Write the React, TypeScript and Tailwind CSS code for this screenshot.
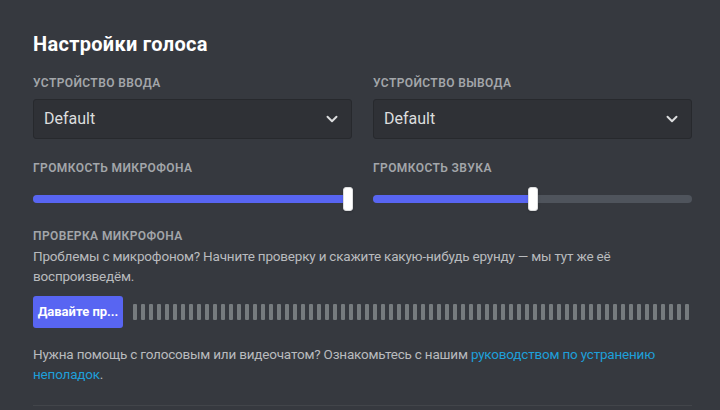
import React from 'react';
import { ChevronDown } from 'lucide-react';

const font = { fontFamily: 'Roboto, "Noto Sans", sans-serif' };

const Label: React.FC<{ children: React.ReactNode; className?: string }> = ({ children, className = '' }) => (
  <div className={`text-[12px] leading-4 font-semibold uppercase tracking-[0.4px] text-[#a3a6aa] ${className}`}>{children}</div>
);

const Select: React.FC<{ value: string }> = ({ value }) => (
  <div className="mt-2 h-10 flex items-center justify-between rounded-[3px] border border-[#27292d] bg-[#2f3136] pl-[10px] pr-[10px]">
    <span className="text-[16px] text-[#dcddde]">{value}</span>
    <ChevronDown size={18} strokeWidth={2.6} className="text-[#dcddde]" />
  </div>
);

const Slider: React.FC<{ percent: number }> = ({ percent }) => (
  <div className="relative mt-[11px] h-6 flex items-center">
    <div className="h-2 w-full rounded-full bg-[#4f545c]">
      <div className="h-2 rounded-full bg-[#5865f2]" style={{ width: `${percent}%` }} />
    </div>
    <div
      className="absolute top-0 h-6 w-[10px] -translate-x-1/2 rounded-[3px] border border-[#dcddde] bg-white shadow"
      style={{ left: `${percent}%` }}
    />
  </div>
);

export default function App() {
  const bars = Array.from({ length: 70 });

  return (
    <div className="w-[720px] h-[410px] overflow-hidden bg-[#36393f]" style={font}>
      <div className="ml-[33px] w-[659px] pt-8">
        <h2 className="text-[20px] leading-6 font-bold tracking-[0.3px] text-white">Настройки голоса</h2>

        <div className="mt-[19px] grid grid-cols-2 gap-x-[21px]">
          <div>
            <Label>Устройство ввода</Label>
            <Select value="Default" />
          </div>
          <div>
            <Label>Устройство вывода</Label>
            <Select value="Default" />
          </div>
        </div>

        <div className="mt-[21px] grid grid-cols-2 gap-x-[21px]">
          <div>
            <Label>Громкость микрофона</Label>
            <Slider percent={98.7} />
          </div>
          <div>
            <Label>Громкость звука</Label>
            <Slider percent={50} />
          </div>
        </div>

        <Label className="mt-[17px]">Проверка микрофона</Label>
        <p className="mt-[2px] text-[13.5px] leading-5 tracking-[-0.2px] text-[#b9bbbe]">
          Проблемы с микрофоном? Начните проверку и скажите какую-нибудь ерунду — мы тут же её воспроизведём.
        </p>

        <div className="mt-[10px] flex items-center gap-[10px]">
          <button className="h-8 w-[90px] shrink-0 whitespace-nowrap rounded-[3px] bg-[#5865f2] px-0 text-[13px] font-bold text-white">
            Давайте пр...
          </button>
          <div className="flex gap-1">
            {bars.map((_, i) => (
              <div key={i} className="h-4 w-1 rounded-[1px] bg-[#767b7e]" />
            ))}
          </div>
        </div>

        <p className="mt-4 text-[13.5px] leading-5 tracking-[-0.2px] text-[#b9bbbe]">
          Нужна помощь с голосовым или видеочатом? Ознакомьтесь с нашим{' '}
          <a className="text-[#1e9fd9]">руководством по устранению неполадок</a>.
        </p>

        <div className="mt-[21px] h-px w-full bg-[#42454a]" />
      </div>
    </div>
  );
}
